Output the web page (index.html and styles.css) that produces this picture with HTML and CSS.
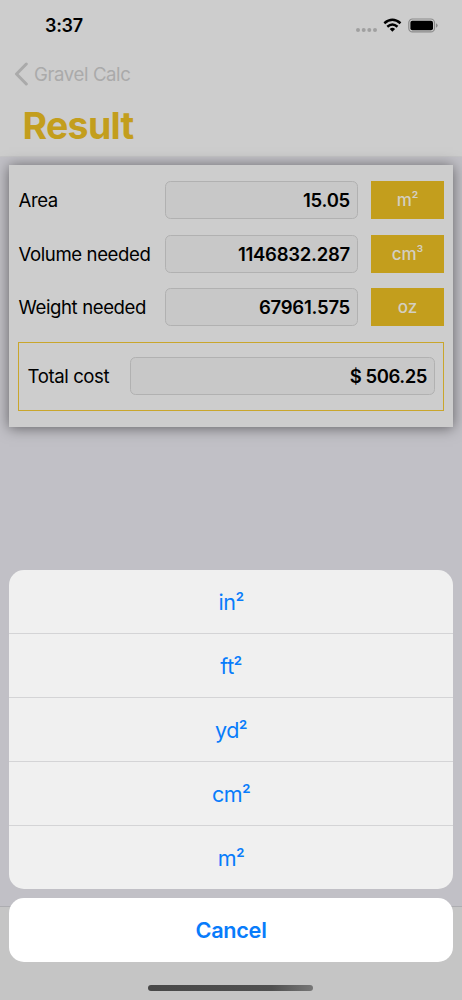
FILE: index.html
```html
<!DOCTYPE html>
<html lang="en">
<head>
<meta charset="utf-8">
<title>Gravel Calc</title>
<link rel="stylesheet" href="styles.css">
</head>
<body>
<div class="screen">
  <header class="header">
    <div class="status">
      <span class="time">3:37</span>
      <svg class="status-icons" width="84" height="16" viewBox="0 0 84 16">
        <g fill="#a0a0a0"><circle cx="3" cy="12" r="2"/><circle cx="8.7" cy="12" r="2"/><circle cx="14.3" cy="12" r="2"/><circle cx="20" cy="12" r="2"/></g>
        <g fill="none" stroke="#000" stroke-width="2.5"><path d="M29.3 5.2Q37.4-1.6 45.5 5.2"/><path d="M32.3 8.7Q37.4 4.3 42.5 8.7"/></g>
        <path d="M34.7 10.9Q37.4 8.8 40.1 10.9L37.4 13.7Z"/>
        <rect x="53.8" y="1" width="25.7" height="12.9" rx="3.7" fill="none" stroke="#8b8b8b" stroke-width="1.2"/>
        <rect x="55.4" y="2.7" width="22.6" height="9.5" rx="2"/>
        <path d="M81 5.3Q82.7 6 82.7 7.5T81 9.7Z" fill="#8b8b8b"/>
      </svg>
    </div>
    <div class="back">
      <svg width="15" height="24" viewBox="0 0 15 24"><path d="M12.3 2L2.5 12L12.3 22" fill="none" stroke="#aaa" stroke-width="3" stroke-linecap="round" stroke-linejoin="round"/></svg>
      <span>Gravel Calc</span>
    </div>
    <h1 class="title">Result</h1>
  </header>
  <main class="card">
    <div class="row"><span class="label">Area</span><span class="field">15.05</span><span class="unit"><span>m<span class="power">²</span></span></span></div>
    <div class="row"><span class="label">Volume needed</span><span class="field">1146832.287</span><span class="unit"><span>cm<span class="power">³</span></span></span></div>
    <div class="row"><span class="label">Weight needed</span><span class="field">67961.575</span><span class="unit">oz</span></div>
    <div class="total"><span class="label">Total cost</span><span class="field">$ 506.25</span></div>
  </main>
  <footer class="toolbar"></footer>
  <div class="sheet">
    <div class="options">
      <div class="option"><span>in<span class="power">²</span></span></div>
      <div class="option"><span>ft<span class="power">²</span></span></div>
      <div class="option"><span>yd<span class="power">²</span></span></div>
      <div class="option"><span>cm<span class="power">²</span></span></div>
      <div class="option"><span>m<span class="power">²</span></span></div>
    </div>
    <div class="cancel">Cancel</div>
    <div class="home"></div>
  </div>
</div>
</body>
</html>
```

FILE: styles.css
```css
* { box-sizing: border-box; }
body { margin: 0; font-family: Inter, "Liberation Sans", sans-serif; color: #000; }
.screen { position: relative; width: 462px; height: 1000px; overflow: hidden; background: #c1c0c6; display: flex; flex-direction: column; }
.header { height: 156.5px; flex: none; background: #cdcdcd; border-bottom: 1px solid #c4c4c5; }
.status { height: 52px; padding: 0 23px 0 45px; display: flex; align-items: center; justify-content: space-between; }
.time { font-size: 18px; line-height: 22px; font-weight: 600; letter-spacing: -.3px; }
.status-icons { margin-bottom: 1px; }
.back { display: flex; align-items: center; gap: 5px; height: 44px; padding-left: 14px; color: #aaa; font-size: 18.6px; line-height: 22px; letter-spacing: -.4px; }
.title { margin: 6px 0 0 22.5px; font-size: 37.5px; line-height: 47px; font-weight: 700; letter-spacing: -.7px; color: #c39e1d; }
.card { flex: none; margin: 8.5px 9px 0; height: 261.5px; padding: 16px 9px 0; background: #cdcdcd; box-shadow: 0 1px 13px rgba(0,0,0,.5); }
.row { display: flex; align-items: center; height: 38px; margin-bottom: 15.6px; }
.label { width: 147px; flex: none; padding-left: .5px; font-size: 18.6px; letter-spacing: -.4px; white-space: nowrap; }
.field { flex: 1; height: 38px; border: 1px solid #b1b1b1; border-radius: 5.5px; background: #c8c8c8; display: flex; align-items: center; justify-content: flex-end; padding-right: 7px; font-size: 18.5px; font-weight: 600; letter-spacing: -.25px; white-space: pre; }
.unit { width: 73px; height: 38px; margin-left: 13px; background: #c39e1d; color: #d3cfc2; display: flex; align-items: center; justify-content: center; font-size: 17px; font-weight: 500; }
.total { height: 69px; border: 1px solid #c9a62c; display: flex; align-items: center; padding: 0 8px; }
.total .label { width: 102.5px; }
.total .field { letter-spacing: -.45px; }
.toolbar { margin-top: auto; height: 94px; border-top: 1px solid #adadb1; background: #c5c5c5; }
.sheet { position: absolute; left: 9px; right: 9px; top: 570px; display: flex; flex-direction: column; align-items: center; }
.options { width: 100%; height: 319px; border-radius: 15px; background: #f0f0f0; overflow: hidden; }
.option { height: 64px; border-bottom: 1px solid #d4d4d6; display: flex; align-items: center; justify-content: center; color: #087cfb; font-size: 21.5px; letter-spacing: -.4px; }
.option:last-child { border: 0; }
.power { font-family: Roboto, sans-serif; font-size: 1.05em; line-height: 0; vertical-align: .1em; font-weight: 400; }
.cancel { width: 100%; height: 64px; margin-top: 9px; border-radius: 15px; background: #fff; display: flex; align-items: center; justify-content: center; color: #087cfb; font-size: 21.7px; font-weight: 600; letter-spacing: -.3px; }
.home { width: 165px; height: 6px; margin: 23px 1px 0 0; border-radius: 3px; background: linear-gradient(90deg, #484848, #505050 75%, #777); }
```
